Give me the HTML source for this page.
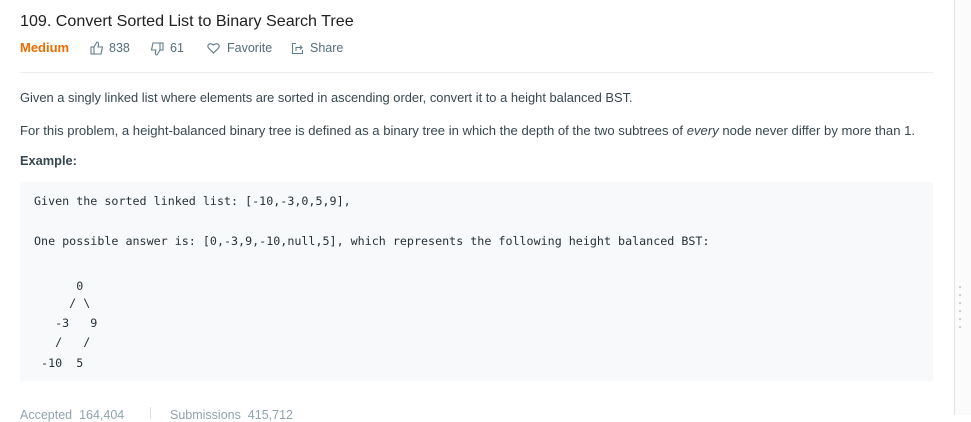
<!DOCTYPE html>
<html><head><meta charset="utf-8"><style>
body{margin:0;width:971px;height:415px;overflow:hidden;background:#fff;font-family:"Liberation Sans","DejaVu Sans",sans-serif;position:relative;color:#212121}
.a{position:absolute;white-space:pre}
.m{font-family:"DejaVu Sans Mono","Liberation Mono",monospace;font-size:11.7px;color:#263238}
.t{font-size:12.5px;color:#546e7a}
</style></head><body>
<div class="a" style="left:20px;top:12px;font-size:16.1px;color:#212121">109. Convert Sorted List to Binary Search Tree</div>
<div class="a" style="left:20px;top:40px;font-size:13px;font-weight:bold;color:#ef6c00">Medium</div>
<svg class="a" style="left:90px;top:41px" width="14" height="14" viewBox="0 0 14 14" fill="none" stroke="#607d8b" stroke-width="1.1"><rect x="1" y="6" width="3" height="7"/><path d="M4 6l3-5c1 0 2 1 1.5 3L8 6h4.5l-1.5 7H4"/></svg>
<div class="a t" style="left:109px;top:41px">838</div>
<svg class="a" style="left:150px;top:42px" width="14" height="14" viewBox="0 0 14 14" fill="none" stroke="#607d8b" stroke-width="1.1"><rect x="10" y="1" width="3" height="7"/><path d="M10 8l-3 5c-1 0-2-1-1.5-3L6 8H1.5L3 1h7"/></svg>
<div class="a t" style="left:170px;top:41px">61</div>
<svg class="a" style="left:207px;top:42px" width="13" height="12" viewBox="0 0 13 12" fill="none" stroke="#607d8b" stroke-width="1.2"><path d="M6.5 11L1.5 6C-0.5 3.5 2.5 0 6.5 3C10.5 0 13.5 3.5 11.5 6z"/></svg>
<div class="a t" style="left:227px;top:41px">Favorite</div>
<svg class="a" style="left:291px;top:42px" width="13" height="13" viewBox="0 0 13 13" fill="none" stroke="#607d8b" stroke-width="1.1"><path d="M5 1.5H1.5v10h10V8"/><path d="M5 9V5.5h6M9 3.5l2 2-2 2"/></svg>
<div class="a t" style="left:310px;top:41px">Share</div>
<div class="a" style="left:20px;top:72px;width:913px;height:1px;background:#eceff1"></div>
<div class="a" style="left:20px;top:90px;font-size:12.9px;color:#37474f">Given a singly linked list where elements are sorted in ascending order, convert it to a height balanced BST.</div>
<div class="a" style="left:20px;top:123px;font-size:13.1px;color:#37474f">For this problem, a height-balanced binary tree is defined as a binary tree in which the depth of the two subtrees of <i>every</i> node never differ by more than 1.</div>
<div class="a" style="left:20px;top:153px;font-size:12.8px;font-weight:bold;color:#37474f">Example:</div>
<div class="a" style="left:20px;top:182px;width:913px;height:199px;background:#f7f9fa;border-radius:3px"></div>
<div class="a m" style="left:34px;top:194px">Given the sorted linked list: [-10,-3,0,5,9],</div>
<div class="a m" style="left:34px;top:234px">One possible answer is: [0,-3,9,-10,null,5], which represents the following height balanced BST:</div>
<div class="a m" style="left:34px;top:279px">      0</div>
<div class="a m" style="left:34px;top:296px">     / \</div>
<div class="a m" style="left:34px;top:316px">   -3   9</div>
<div class="a m" style="left:34px;top:335px">   /   /</div>
<div class="a m" style="left:34px;top:356px"> -10  5</div>
<div class="a t" style="left:20px;top:408px;color:#90a4ae">Accepted  164,404</div>
<div class="a" style="left:150px;top:407px;width:1px;height:12px;background:#e0e0e0"></div>
<div class="a t" style="left:170px;top:408px;color:#90a4ae">Submissions  415,712</div>
<div class="a" style="left:954px;top:0;width:1px;height:415px;background:#e3e3e3"></div>
<div class="a" style="left:955px;top:0;width:16px;height:415px;background:#fbfbfb"></div>
<div class="a" style="left:959px;top:286px;width:2px;height:42px;background:repeating-linear-gradient(#c8cdd0 0 2px,transparent 2px 8px)"></div>
</body></html>
